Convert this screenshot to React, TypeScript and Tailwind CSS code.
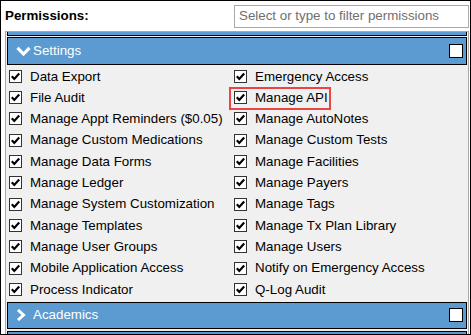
import React from "react";

const left = [
  "Data Export",
  "File Audit",
  "Manage Appt Reminders ($0.05)",
  "Manage Custom Medications",
  "Manage Data Forms",
  "Manage Ledger",
  "Manage System Customization",
  "Manage Templates",
  "Manage User Groups",
  "Mobile Application Access",
  "Process Indicator",
];
const right = [
  "Emergency Access",
  "Manage API",
  "Manage AutoNotes",
  "Manage Custom Tests",
  "Manage Facilities",
  "Manage Payers",
  "Manage Tags",
  "Manage Tx Plan Library",
  "Manage Users",
  "Notify on Emergency Access",
  "Q-Log Audit",
];

function Check() {
  return (
    <svg width="13" height="13" viewBox="0 0 13 13" className="shrink-0">
      <rect x="0.5" y="0.5" width="12" height="12" fill="#fff" stroke="#333" />
      <path d="M2.8 6.2 L5.3 8.9 L10.2 3.6" fill="none" stroke="#000" strokeWidth="2.2" />
    </svg>
  );
}

function Item({ label, highlight }: { label: string; highlight?: boolean }) {
  return (
    <div className="relative flex h-[21.33px] items-center gap-[8px]">
      <Check />
      <span className="whitespace-nowrap text-[13.33px] leading-none text-black">{label}</span>
      {highlight && (
        <div className="absolute left-[-5px] top-[0px] h-[23px] w-[102px] border-2 border-[#ea4444]" />
      )}
    </div>
  );
}

function ChevronRight() {
  return (
    <svg width="10" height="12" viewBox="0 0 10 12">
      <path d="M2 1 L7.5 6 L2 11" fill="none" stroke="#fff" strokeWidth="3" />
    </svg>
  );
}

export default function App() {
  return (
    <div
      className="h-[335px] w-[471px] overflow-hidden border border-black bg-white"
      style={{ fontFamily: '"Liberation Sans", Arial, sans-serif' }}
    >
      <div className="flex h-[30px] items-center justify-between pl-[4px] pr-[1px]">
        <span className="text-[13.33px] font-bold text-black">Permissions:</span>
        <div className="flex h-[23px] w-[235px] items-center border border-[#a9a9a9] bg-white pl-[4px] text-[13.33px] text-[#6f6f6f]">
          Select or type to filter permissions
        </div>
      </div>
      <div className="ml-[4px] mr-[1px] h-[310px] overflow-hidden border border-[#a8a8a8] bg-[#f0f0f0] px-[1px]">
        <div className="h-[4px] border-x border-b border-black bg-[#5b9bd1]" />
        <div className="mt-[1px]">
          <div className="flex h-[28px] items-center border border-black bg-[#5b9bd1] pl-[8px] pr-[3px]">
            <div className="flex w-[17px] items-center">
              <svg width="15" height="10" viewBox="0 0 15 10">
                <path d="M1.5 1.8 L7.5 8 L13.5 1.8" fill="none" stroke="#fff" strokeWidth="3.2" />
              </svg>
            </div>
            <span className="flex-1 text-[13.33px] text-white">Settings</span>
            <div className="h-[14px] w-[14px] border border-black bg-white" />
          </div>
          <div className="grid grid-cols-[225px_1fr] pl-[2px] pt-[0.5px]">
            <div className="flex flex-col">
              {left.map((l) => (
                <Item key={l} label={l} />
              ))}
            </div>
            <div className="flex flex-col">
              {right.map((l) => (
                <Item key={l} label={l} highlight={l === "Manage API"} />
              ))}
            </div>
          </div>
          <div className="h-[1.5px]" />
          <div className="flex h-[27px] items-center border border-black bg-[#5b9bd1] pl-[8px] pr-[3px]">
            <div className="flex w-[17px] items-center">
              <ChevronRight />
            </div>
            <span className="flex-1 text-[13.33px] text-white">Academics</span>
            <div className="h-[14px] w-[14px] border border-black bg-white" />
          </div>
          <div className="mt-[2px] h-[20px] border border-black bg-[#5b9bd1]" />
        </div>
      </div>
    </div>
  );
}
